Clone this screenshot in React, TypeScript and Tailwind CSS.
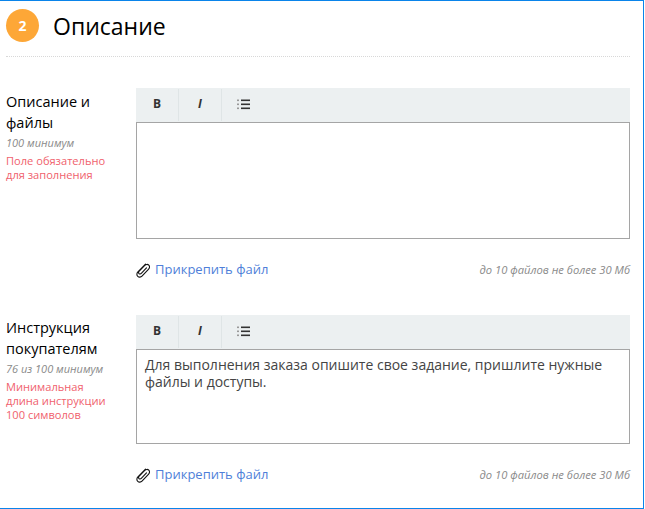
import React from "react";

const Clip = () => (
  <svg width="14" height="15" viewBox="0 0 14 15" fill="none" stroke="#111" strokeWidth="1.1" strokeLinecap="round" strokeLinejoin="round" className="shrink-0">
    <path d="M9.5 1.2 1.9 8.9C.5 10.4.6 12.3 1.8 13.4c1.1 1.1 3 1 4.2-.3l6.4-6.8c1.2-1.3 1.4-3.1.4-4.2-1-1-2.8-.9-4 .3L3.2 8.2c-.8.9-.8 1.8-.2 2.4.6.6 1.5.5 2.3-.3l5.2-5.4" />
  </svg>
);

const ListIcon = () => (
  <svg width="13" height="11" viewBox="0 0 13 11" className="block">
    <rect x="4" y="0.5" width="9" height="1.6" fill="#333" />
    <rect x="4" y="4.5" width="9" height="1.6" fill="#333" />
    <rect x="4" y="8.5" width="9" height="1.6" fill="#333" />
    <rect x="0" y="0.5" width="2" height="1.6" fill="#999" />
    <rect x="0" y="4.5" width="2" height="1.6" fill="#999" />
    <rect x="0" y="8.5" width="2" height="1.6" fill="#999" />
  </svg>
);

const Toolbar = () => (
  <div className="flex h-[34px] bg-[#ecf0f1] py-px">
    <div className="flex w-[43px] items-center justify-center border-r border-[#dfe5e6] pb-[2px] text-[12px] font-bold text-[#333]">B</div>
    <div className="flex w-[43px] items-center justify-center border-r border-[#dfe5e6] pb-[2px] text-[12px] font-bold italic text-[#333]">I</div>
    <div className="flex w-[43px] items-center justify-center pb-[2px]"><ListIcon /></div>
  </div>
);

const Attach = () => (
  <div className="flex h-[20px] items-center justify-between">
    <div className="flex items-center gap-[5px]">
      <Clip />
      <span className="text-[13px] text-[#4f7fd9]">Прикрепить файл</span>
    </div>
    <span className="text-[11.2px] italic text-[#8a8a8a]">до 10 файлов не более 30 Мб</span>
  </div>
);

export default function App() {
  return (
    <div className="h-[509px] w-[644px] border-t border-r border-b border-[#0a84ea] bg-white pl-[6px] pr-[13px] font-['Open_Sans',sans-serif]">
      <div className="flex h-[56px] items-center gap-[14px] border-b border-dotted border-[#d8d8d8] pb-[6px]">
        <div className="flex h-[33px] w-[33px] items-center justify-center rounded-full bg-[#fda737] text-[14px] font-bold text-white">2</div>
        <div className="mt-[2px] text-[23px] font-medium leading-none text-black">Описание</div>
      </div>

      <div className="mt-[31px] flex gap-[8px]">
        <div className="w-[122px] pt-[3px]">
          <div className="w-[100px] text-[14.5px] font-medium leading-[21px] text-black">Описание и файлы</div>
          <div className="mt-px text-[11px] italic leading-[17px] text-[#8a8a8a]">100 минимум</div>
          <div className="mt-[3px] w-[104px] text-[11.1px] leading-[14px] text-[#f0616d]">Поле обязательно для заполнения</div>
        </div>
        <div className="flex-1">
          <Toolbar />
          <div className="h-[117px] border border-[#a5a5a5]" />
          <div className="mt-[21px]"><Attach /></div>
        </div>
      </div>

      <div className="mt-[35px] flex gap-[8px]">
        <div className="w-[122px] pt-[2px]">
          <div className="w-[100px] text-[14.5px] font-medium leading-[21px] text-black">Инструкция покупателям</div>
          <div className="mt-px text-[11px] italic leading-[17px] text-[#8a8a8a]">76 из 100 минимум</div>
          <div className="mt-[3px] w-[104px] text-[11.1px] leading-[14px] text-[#f0616d]">Минимальная длина инструкции 100 символов</div>
        </div>
        <div className="flex-1">
          <Toolbar />
          <div className="h-[95px] border border-[#a5a5a5] px-[8px] py-[6px] text-[14px] leading-[17px] text-[#444]">
            Для выполнения заказа опишите свое задание, пришлите нужные файлы и доступы.
          </div>
          <div className="mt-[21px]"><Attach /></div>
        </div>
      </div>
    </div>
  );
}
